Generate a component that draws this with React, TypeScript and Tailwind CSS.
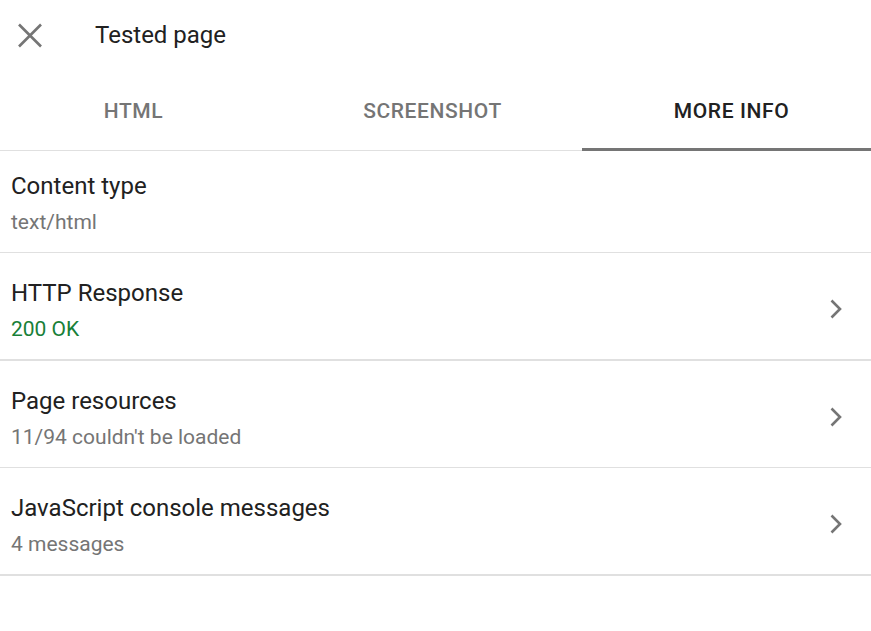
import React from "react";

const rows = [
  { title: "Content type", sub: "text/html", subColor: "text-[#757575]", chevron: false, h: "h-[102px] pt-[21px]", border: "border-b border-[#e0e0e0]" },
  { title: "HTTP Response", sub: "200 OK", subColor: "text-[#188038]", chevron: true, h: "h-[108px] pt-[26px]", border: "border-b-2 border-[#e0e0e0]" },
  { title: "Page resources", sub: "11/94 couldn't be loaded", subColor: "text-[#757575]", chevron: true, h: "h-[107px] pt-[26px]", border: "border-b border-[#e0e0e0]" },
  { title: "JavaScript console messages", sub: "4 messages", subColor: "text-[#757575]", chevron: true, h: "h-[108px] pt-[26px]", border: "border-b-2 border-[#e0e0e0]" },
];

function Chevron() {
  return (
    <svg width="16" height="22" viewBox="0 0 16 22" className="shrink-0">
      <polyline points="2.5,2.5 11,11 2.5,19.5" fill="none" stroke="#757575" strokeWidth="2.6" />
    </svg>
  );
}

export default function App() {
  return (
    <div className="w-[871px] h-[631px] bg-white overflow-hidden" style={{ fontFamily: "Roboto, 'Liberation Sans', sans-serif" }}>
      <div className="h-[70px] flex items-center">
        <svg width="60" height="70" viewBox="0 0 60 70" className="shrink-0">
          <line x1="19" y1="24.5" x2="41" y2="46.5" stroke="#757575" strokeWidth="2.6" />
          <line x1="41" y1="24.5" x2="19" y2="46.5" stroke="#757575" strokeWidth="2.6" />
        </svg>
        <div className="ml-[35px] text-[24px] text-[#212121] leading-none">Tested page</div>
      </div>
      <div className="h-[81px] overflow-hidden">
        <div className="flex ml-[-16px] h-full">
          {["HTML", "SCREENSHOT", "MORE INFO"].map((t, i) => (
            <div
              key={t}
              className={
                "w-[299px] shrink-0 h-[81px] flex items-start justify-center pt-[31px] text-[21px] leading-[21px] font-medium tracking-[0.6px] " +
                (i === 2 ? "text-[#212121] border-b-[3px] border-[#757575]" : "text-[#757575] border-b border-[#e0e0e0]")
              }
            >
              {t}
            </div>
          ))}
        </div>
      </div>
      {rows.map((r) => (
        <div key={r.title} className={"flex items-stretch pl-[11px] pr-[26px] " + r.h + " " + r.border}>
          <div className="flex-1 flex flex-col">
            <div className="text-[24px] text-[#212121] leading-[28px]">{r.title}</div>
            <div className={"text-[21px] leading-[24px] mt-[10px] " + r.subColor}>{r.sub}</div>
          </div>
          {r.chevron && (
            <div className="flex items-center pb-[20px]">
              <Chevron />
            </div>
          )}
        </div>
      ))}
    </div>
  );
}
